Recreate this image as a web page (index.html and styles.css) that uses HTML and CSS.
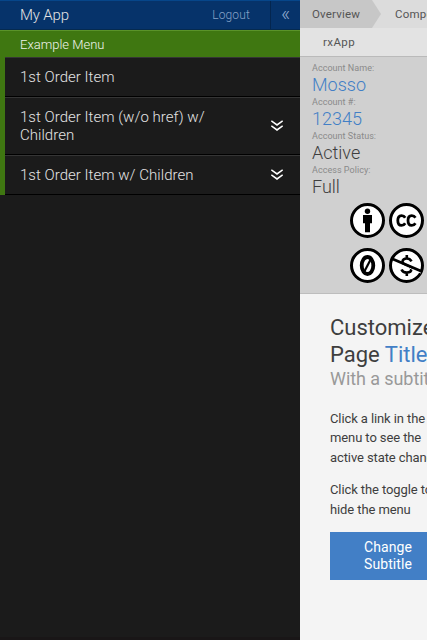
FILE: index.html
```html
<!DOCTYPE html>
<html lang="en">
<head>
<meta charset="utf-8">
<title>My App</title>
<link rel="stylesheet" href="styles.css">
</head>
<body>
<div class="app">
  <aside class="sidebar">
    <header class="bar">
      <span class="app-title">My App</span>
      <a class="logout">Logout</a>
      <a class="collapse">«</a>
    </header>
    <nav class="menu">
      <div class="menu-title">Example Menu</div>
      <ul class="items">
        <li class="item"><span class="label">1st Order Item</span></li>
        <li class="item tall"><span class="label">1st Order Item (w/o href) w/ Children</span>
          <svg class="chevron" viewBox="0 0 12 11"><path d="M.3 .8L6 4.900 11.700 .8M.3 5.800L6 9.900 11.700 5.800"/></svg></li>
        <li class="item"><span class="label">1st Order Item w/ Children</span>
          <svg class="chevron" viewBox="0 0 12 11"><path d="M.3 .8L6 4.900 11.700 .8M.3 5.800L6 9.900 11.700 5.800"/></svg></li>
      </ul>
    </nav>
  </aside>
  <main class="content">
    <div class="crumbs"><span class="crumb first">Overview</span><span class="crumb">Components</span></div>
    <div class="crumbs-current">rxApp</div>
    <section class="account">
      <dl class="info">
        <dt>Account Name:</dt><dd class="link">Mosso</dd>
        <dt>Account #:</dt><dd class="link">12345</dd>
        <dt>Account Status:</dt><dd>Active</dd>
        <dt>Access Policy:</dt><dd>Full</dd>
      </dl>
      <div class="badges">
        <svg class="badge" viewBox="0 0 36 36"><circle class="ring" cx="17.500" cy="18" r="16"/><circle cx="17.500" cy="8.800" r="2.700"/><path d="M13 12.500h9v8.300h-2v9h-5v-9h-2z"/></svg>
        <svg class="badge" viewBox="0 0 36 36"><circle class="ring" cx="17.500" cy="18" r="16"/><path class="stroke" d="M16.200 15.200C15.300 13.600 14 13.100 12.500 13.100C10.100 13.100 8.800 15 8.800 18C8.800 21 10.100 22.900 12.500 22.900C14 22.900 15.300 22.200 16.200 20.700M26.400 15.200C25.500 13.600 24.200 13.100 22.700 13.100C20.300 13.100 19 15 19 18C19 21 20.300 22.900 22.700 22.900C24.200 22.900 25.500 22.200 26.400 20.700"/></svg>
        <svg class="badge" viewBox="0 0 36 36"><circle class="ring" cx="17.500" cy="18" r="16"/><ellipse class="zero" cx="17.500" cy="18" rx="5.800" ry="8.500"/><path class="slash" d="M20.900 11.500L14.100 24.500"/></svg>
        <svg class="badge" viewBox="0 0 36 36"><circle class="ring" cx="17.500" cy="18" r="16"/><path class="dollar" d="M17.800 7.500V11M17.800 25V28.500M22.500 13.800C21.500 12 20 11 17.800 11C15.300 11 13.500 12.200 13.500 14.300C13.500 19 22.300 17 22.300 21.800C22.300 23.900 20.500 25 17.800 25C15.300 25 13.500 24.200 12.500 21.900"/><path class="gap" d="M4 13.500L32 25.500"/><path class="strike" d="M2.500 11L33 24"/></svg>
      </div>
    </section>
    <section class="page">
      <h1>Customized Page <span class="link">Title</span></h1>
      <h2>With a subtitle</h2>
      <p>Click a link in the menu to see the active state change</p>
      <p>Click the toggle to hide the menu</p>
      <button class="button">Change Subtitle</button>
    </section>
  </main>
</div>
</body>
</html>
```
FILE: styles.css
```css
* { box-sizing: border-box; }
body {
  margin: 0;
  background: #fff;
  color: #3e3e3e;
  font-family: Roboto, sans-serif;
  font-size: 13px;
  overflow: hidden;
}
.app { display: flex; height: 640px; overflow: hidden; }

.sidebar {
  flex: 0 0 300px;
  background: #1b1b1b;
  border-bottom: 3px solid #191617;
  color: #e4e4e4;
  font-weight: 300;
}
.bar {
  display: flex;
  height: 30px;
  line-height: 28px;
  background: #06336a;
  border-top: 1px solid #06468a;
  border-bottom: 1px solid #052a50;
  padding-left: 20px;
}
.app-title { flex: 1; font-size: 15px; letter-spacing: -.15px; }
.logout { padding-right: 20px; font-size: 12px; letter-spacing: .15px; color: #86a3c9; }
.collapse {
  width: 30px;
  border-left: 1px solid #04264f;
  text-align: center;
  font-size: 20px;
  line-height: 25px;
  color: #92acd0;
}
.menu { border-left: 5px solid #3f7711; }
.menu-title {
  height: 27px;
  margin-left: -5px;
  padding-left: 20px;
  background: #3f7711;
  border-top: 1px solid #5a9329;
  line-height: 28px;
  font-size: 13px;
  color: #f0f5ec;
}
.items { margin: 0; padding: 0; list-style: none; }
.item {
  display: flex;
  align-items: center;
  justify-content: space-between;
  height: 40px;
  padding: 0 17px 0 15px;
  border-top: 1px solid #353535;
  border-bottom: 1px solid #000;
  font-size: 15px;
  line-height: 18px;
  letter-spacing: .03px;
}
.item.tall { height: 58px; }
.label { width: 200px; }
.chevron { width: 12px; height: 11px; margin-top: -1px; fill: none; stroke: #fff; stroke-width: 1.6; }

.content { flex: 1; min-width: 0; overflow: hidden; background: #f4f4f4; }
.crumbs {
  display: flex;
  height: 28px;
  line-height: 28px;
  background: #dcdcdc;
  font-size: 11.5px;
  letter-spacing: .2px;
  color: #555;
}
.crumb { flex: none; padding-left: 13px; }
.crumb.first {
  width: 82px;
  padding-left: 12px;
  background: #c7c7c7;
  clip-path: polygon(0 0, 72px 0, 81px 14px, 72px 100%, 0 100%);
}
.crumbs-current {
  height: 29px;
  padding-left: 23px;
  background: #e3e3e3;
  border-bottom: 1px solid #bababa;
  line-height: 29px;
  font-size: 11.5px;
  letter-spacing: .4px;
  color: #555;
}
.account { height: 237px; padding: 6px 0 0 12px; background: #d0d0d0; border-bottom: 1px solid #bdbdbd; }
.info { margin: 0; }
.info dt { height: 11px; line-height: 11px; font-size: 9px; letter-spacing: .04px; color: #8a8a8a; }
.info dd { height: 23px; margin: 0; line-height: 22px; font-size: 18px; font-weight: 300; }
.info dd.link, .link { color: #427fc6; }
.badges { display: grid; grid-template-columns: 36px 36px; gap: 9px 3px; margin: 3px 0 0 38px; }
.badge { width: 36px; height: 36px; transform: translateY(.5px); }
.ring { fill: #fff; stroke: #000; stroke-width: 3; }
.stroke { fill: none; stroke: #000; stroke-width: 2.8; }
.zero { fill: none; stroke: #000; stroke-width: 3.8; }
.slash { stroke: #000; stroke-width: 2.2; }
.dollar { fill: none; stroke: #000; stroke-width: 2.6; }
.gap { stroke: #fff; stroke-width: 1; }
.strike { stroke: #000; stroke-width: 2.8; }

.page { width: 127px; padding: 20px 0 0 30px; }
h1 { width: 115px; margin: 0; font-size: 22px; font-weight: 400; line-height: 27px; }
h2 { margin: 0 0 19px; font-size: 18px; font-weight: 400; line-height: 22px; letter-spacing: -.08px; color: #999; white-space: nowrap; }
p { width: 114px; margin: 0 0 13px; font-size: 13px; line-height: 19.4px; letter-spacing: -.1px; }
.button {
  display: block;
  width: 116px;
  height: 48px;
  border: 0;
  padding: 0 34px 1px 32px;
  background: #427fc6;
  color: #fff;
  font: 14px/17px Roboto, sans-serif;
  letter-spacing: .08px;
  text-align: right;
  white-space: normal;
}
```
